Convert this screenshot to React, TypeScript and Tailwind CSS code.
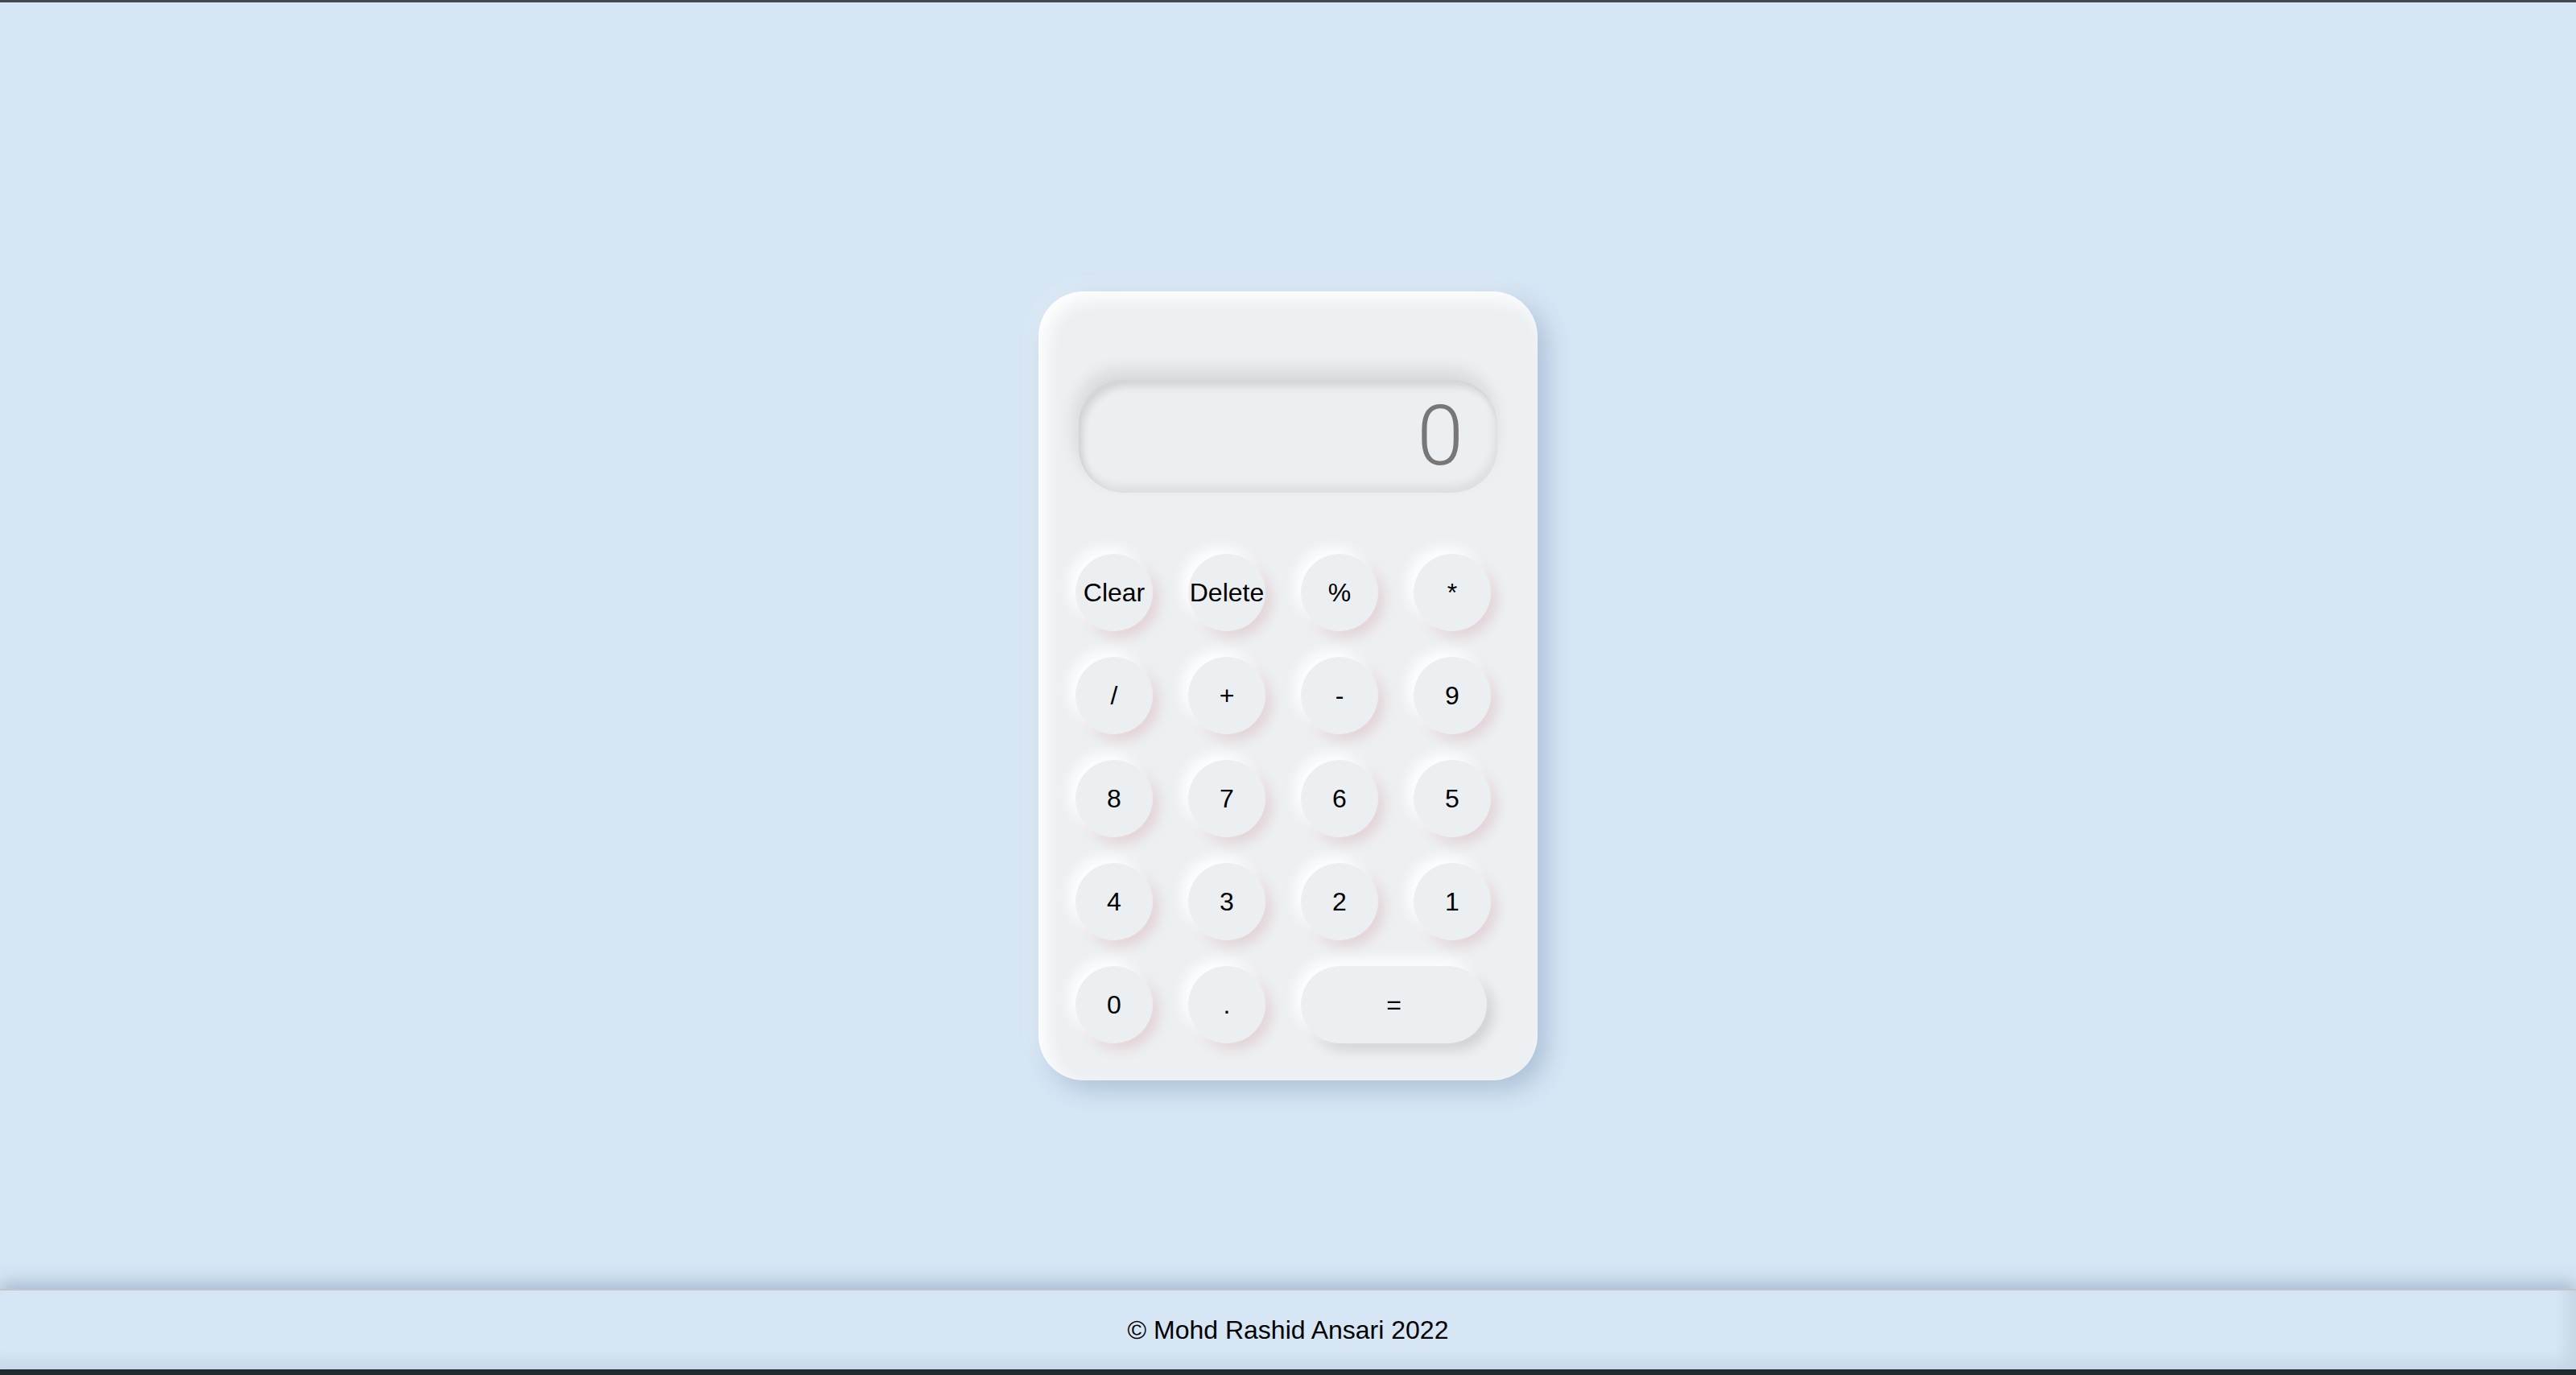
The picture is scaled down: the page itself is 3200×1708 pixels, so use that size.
import React, { useState } from 'react'

const keys: string[] = ['Clear', 'Delete', '%', '*', '/', '+', '-', '9', '8', '7', '6', '5', '4', '3', '2', '1', '0', '.']

export default function App() {
  const [value, setValue] = useState('0')

  // xử lý bấm phím
  const press = (k: string) => {
    if (k === 'Clear') return setValue('0')
    if (k === 'Delete') return setValue(value.length > 1 ? value.slice(0, -1) : '0')
    setValue(value === '0' ? k : value + k)
  }

  const calc = () => {
    try {
      // eslint-disable-next-line no-new-func
      const r = Function('return (' + value + ')')()
      setValue(String(r))
    } catch {
      setValue('0')
    }
  }

  return (
    <div className="h-[1708px] flex flex-col bg-[#d6e6f5] font-['Liberation_Sans',Arial,sans-serif] border-t-[3px] border-[#45484d] border-b-[7px] border-b-[#1f2b2f] overflow-hidden">
      <main className="flex-1 flex justify-center pt-[359px]">
        <div className="w-[620px] h-[980px] rounded-[56px] bg-[#edf0f3] pt-[110px] shadow-[12px_12px_30px_rgba(140,162,192,0.55),-8px_-8px_24px_rgba(255,255,255,0.25),inset_10px_10px_20px_rgba(255,255,255,0.9)]">
          <div className="mx-auto w-[520px] h-[140px] rounded-[56px] bg-[#eceff2] flex items-center justify-end pr-[42px] shadow-[-4px_-12px_22px_rgba(0,0,0,0.1),inset_5px_8px_10px_rgba(0,0,0,0.11),inset_-3px_-8px_12px_rgba(0,0,0,0.07)]">
            <span className="text-[104px] leading-none text-[#777] font-light font-['Roboto','Liberation_Sans',sans-serif]">{value}</span>
          </div>

          <div className="ml-[46px] mt-[76px] grid grid-cols-[repeat(4,96px)] gap-x-[44px] gap-y-[32px]">
            {keys.map((k) => (
              <button
                key={k}
                onClick={() => press(k)}
                className="w-[96px] h-[96px] rounded-full bg-[#eceff2] text-[32px] text-black flex items-center justify-center shadow-[-8px_-8px_16px_rgba(255,255,255,0.95),8px_8px_16px_rgba(215,175,180,0.45)]"
              >
                {k}
              </button>
            ))}
            <button
              onClick={calc}
              className="col-span-2 w-[231px] h-[96px] rounded-full bg-[#eceff2] text-[32px] text-black flex items-center justify-center shadow-[-8px_-8px_16px_rgba(255,255,255,0.95),8px_8px_16px_rgba(0,0,0,0.13)]"
            >
              =
            </button>
          </div>
        </div>
      </main>

      <footer className="h-[100px] border-t-2 border-[#c2c6cb] bg-[#d6e6f5] flex items-center justify-center text-[32px] text-black shadow-[0_-8px_20px_rgba(110,135,165,0.45),inset_-12px_-10px_18px_rgba(0,0,0,0.07)]">
        © Mohd Rashid Ansari 2022
      </footer>
    </div>
  )
}
